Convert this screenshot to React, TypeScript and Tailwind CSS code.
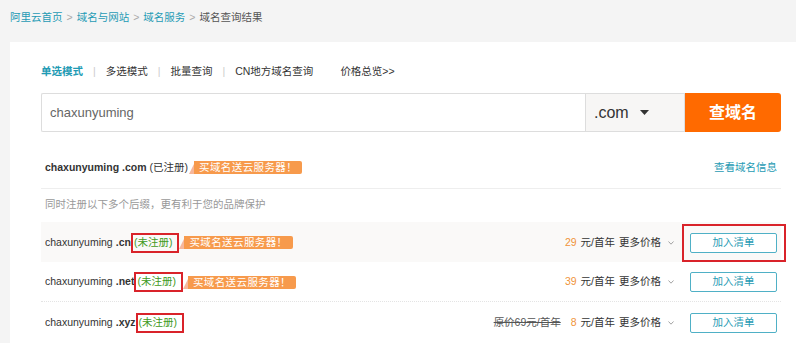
export default function App() {
  const rows = [
    { suffix: ".cn", price: "29", badge: true, bg: true, old: "" },
    { suffix: ".net", price: "39", badge: true, bg: false, old: "" },
    { suffix: ".xyz", price: "8", badge: false, bg: false, old: "原价69元/首年" },
  ]

  const Badge = () => (
    <span className="inline-flex items-end h-[13px]">
      <svg width="5" height="13" viewBox="0 0 5 13" className="block">
        <polygon points="0,13 5,3 5,13" fill="#f6b79c" />
      </svg>
      <span className="h-[13px] leading-[13px] bg-[#f79a4c] text-white px-[5px] rounded-r-[2px] text-[10.5px] tracking-[0.4px]">
        买域名送云服务器！
      </span>
    </span>
  )

  return (
    <div className="min-h-[343px] bg-[#f4f4f4] font-['Liberation_Sans','Noto_Sans_CJK_SC',sans-serif] text-[#333] overflow-hidden">
      {/* breadcrumb */}
      <div className="pt-[10px] pl-[10px] h-[24px] leading-[14px] text-[10.5px] flex items-center gap-[4px]">
        <span className="text-[#1f9bb4]">阿里云首页</span>
        <span className="text-[#aaa]">&gt;</span>
        <span className="text-[#1f9bb4]">域名与网站</span>
        <span className="text-[#aaa]">&gt;</span>
        <span className="text-[#1f9bb4]">域名服务</span>
        <span className="text-[#aaa]">&gt;</span>
        <span className="text-[#555]">域名查询结果</span>
      </div>

      <div className="mt-[18px] ml-[10px] bg-white pl-[31px] pt-[22px] h-[301px]">
        <div className="w-[740px]">
          {/* tabs */}
          <div className="h-[16px] flex items-center text-[10.5px]">
            <span className="font-bold text-[#1f9bb4]">单选模式</span>
            <span className="mx-[10px] text-[#ccc]">|</span>
            <span>多选模式</span>
            <span className="mx-[10px] text-[#ccc]">|</span>
            <span>批量查询</span>
            <span className="mx-[10px] text-[#ccc]">|</span>
            <span>CN地方域名查询</span>
            <span className="ml-[27px]">价格总览&gt;&gt;</span>
          </div>

          {/* search */}
          <div className="mt-[13px] h-[39px] flex">
            <div className="flex-1 border border-[#ddd] border-r-0 rounded-l-[2px] flex items-center pl-[8px] text-[13px] text-[#666]">
              chaxunyuming
            </div>
            <div className="w-[100px] bg-[#f7f6f5] border border-[#ddd] flex items-center pl-[8px] text-[16px] text-[#333]">
              .com
              <svg width="9" height="5" viewBox="0 0 9 5" className="ml-[11px]">
                <polygon points="0,0 9,0 4.5,5" fill="#333" />
              </svg>
            </div>
            <div className="w-[96px] bg-[#ff6a00] rounded-r-[3px] flex items-center justify-center text-white text-[16px] font-bold">
              查域名
            </div>
          </div>

          {/* registered */}
          <div className="mt-[17px] h-[40px] pb-[2px] px-[4px] flex items-center justify-between border-b border-[#eee] text-[10.5px]">
            <div className="flex items-center">
              <span className="font-bold">chaxunyuming .com</span>
              <span className="ml-[3px] mr-[1px]">(已注册)</span>
              <Badge />
            </div>
            <span className="text-[#1f9bb4]">查看域名信息</span>
          </div>

          <div className="h-[33px] pb-[2px] px-[4px] flex items-center text-[10.5px] text-[#999]">
            同时注册以下多个后缀，更有利于您的品牌保护
          </div>

          {rows.map((r, i) => (
            <div
              key={i}
              className={
                "h-[40px] pt-[1px] px-[4px] flex items-center justify-between text-[10.5px] " +
                (r.bg ? "bg-[#faf9f8]" : "") +
                (i === 1 ? "border-b border-dotted border-[#e4e4e4]" : "")
              }
            >
              <div className="flex items-center">
                <span>chaxunyuming </span>
                <span className="font-bold ml-[3px]">{r.suffix}</span>
                <span className="h-[20px] border-2 border-[#d9232a] pl-[1px] pr-[5px] flex items-center text-[#3f9a22]">
                  (未注册)
                </span>
                {r.badge && <Badge />}
              </div>
              <div className="flex items-center">
                {r.old && <span className="line-through text-[#555] mr-[10px]">{r.old}</span>}
                <span className="text-[#f0943a]">{r.price}</span>
                <span className="ml-[4px]">元/首年</span>
                <span className="ml-[4px]">更多价格</span>
                <svg width="6" height="4" viewBox="0 0 6 4" className="ml-[7px]">
                  <polyline points="0.5,0.5 3,3.2 5.5,0.5" fill="none" stroke="#999" strokeWidth="0.9" />
                </svg>
                <span className="relative ml-[16px]">
                  <button className="block w-[87px] h-[20px] border border-[#4fb0c6] rounded-[2px] bg-white text-[#1f9bb4] text-[10.5px]">
                    加入清单
                  </button>
                  {i === 0 && (
                    <span className="absolute -left-[8px] -right-[9px] -top-[9px] -bottom-[9px] border-2 border-[#d9232a]" />
                  )}
                </span>
              </div>
            </div>
          ))}
        </div>
      </div>
    </div>
  )
}
